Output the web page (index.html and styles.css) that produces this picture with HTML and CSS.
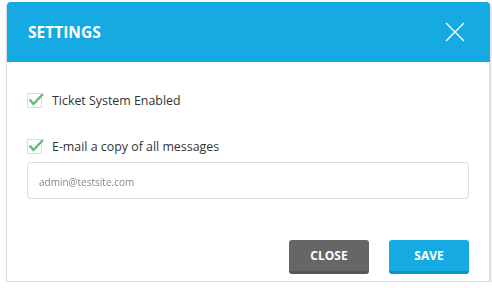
FILE: index.html
```html
<!DOCTYPE html>
<html lang="en">
<head>
    <meta charset="UTF-8">
    <meta name="viewport" content="width=device-width, initial-scale=1.0">
    <title>Settings</title>
    <link rel="stylesheet" href="styles.css">
</head>
<body>
    <div class="modal">
        <div class="modal-header">
            <h1>SETTINGS</h1>
            <button type="button" class="close-x" aria-label="Close">
                <svg width="20" height="20" viewBox="0 0 20 20">
                    <path d="M1 1 L19 19 M19 1 L1 19" stroke="#fff" stroke-width="1.4" fill="none"/>
                </svg>
            </button>
        </div>
        <div class="modal-body">
            <label class="check-row">
                <span class="check">
                    <svg width="18" height="16" viewBox="0 0 18 16">
                        <rect x="0.5" y="1.5" width="14" height="14" fill="none" stroke="#ddd"/>
                        <path d="M2.5 7.5 L6.5 12 L16 2" stroke="#5bbf7a" stroke-width="2.4" fill="none"/>
                    </svg>
                </span>
                Ticket System Enabled
            </label>
            <label class="check-row second">
                <span class="check">
                    <svg width="18" height="16" viewBox="0 0 18 16">
                        <rect x="0.5" y="1.5" width="14" height="14" fill="none" stroke="#ddd"/>
                        <path d="M2.5 7.5 L6.5 12 L16 2" stroke="#5bbf7a" stroke-width="2.4" fill="none"/>
                    </svg>
                </span>
                E-mail a copy of all messages
            </label>
            <div class="email-box"><span class="email">admin@testsite.com</span></div>
        </div>
        <div class="modal-footer">
            <button type="button" class="btn btn-close">CLOSE</button>
            <button type="button" class="btn btn-save">SAVE</button>
        </div>
    </div>
</body>
</html>
```

FILE: styles.css
```css
body {
    font-family: "Open Sans", Arial, sans-serif;
    margin: 0;
    padding: 0;
    background-color: #fff;
}

.modal {
    width: 482px;
    height: 279px;
    margin: 2px 0 0 6px;
    background-color: #fff;
    border: 1px solid #ddd;
    border-top: none;
    border-radius: 4px 4px 0 0;
    box-shadow: 1px 2px 3px rgba(0, 0, 0, 0.18);
    display: flex;
    flex-direction: column;
}

.modal-header {
    height: 60px;
    margin: 0 -1px 0 0;
    background-color: #15aae1;
    border-radius: 4px 4px 0 0;
    display: flex;
    align-items: center;
    justify-content: space-between;
    padding: 0 25px 0 21px;
}

.modal-header h1 {
    margin: 0;
    font-size: 15.5px;
    font-weight: bold;
    color: #fff;
}

.close-x {
    background: none;
    border: none;
    padding: 0;
    width: 20px;
    height: 20px;
    cursor: pointer;
}

.close-x svg {
    display: block;
}

.modal-body {
    padding: 28px 20px 0 20px;
}

.check-row {
    display: flex;
    align-items: center;
    height: 20px;
    font-size: 12.4px;
    color: #333;
}

.check-row.second {
    margin-top: 26px;
}

.check {
    width: 18px;
    height: 16px;
    margin-right: 7px;
}

.check svg {
    display: block;
}

.email-box {
    margin-top: 6px;
    height: 32px;
    border: 1px solid #ddd;
    border-radius: 4px;
    display: flex;
    align-items: center;
    padding: 3px 10px 0 11px;
}

.email {
    font-size: 10px;
    color: #888;
    filter: blur(0.7px);
}

.modal-footer {
    display: flex;
    justify-content: flex-end;
    gap: 20px;
    padding: 41px 20px 0 20px;
}

.btn {
    width: 80px;
    height: 34px;
    border: none;
    border-radius: 3px;
    font-family: "Open Sans", Arial, sans-serif;
    font-size: 12px;
    font-weight: bold;
    color: #fff;
    cursor: pointer;
}

.btn-close {
    background-color: #666;
    border-bottom: 3px solid #565656;
}

.btn-save {
    background-color: #15aae1;
    border-bottom: 3px solid #0f93c5;
}
```
